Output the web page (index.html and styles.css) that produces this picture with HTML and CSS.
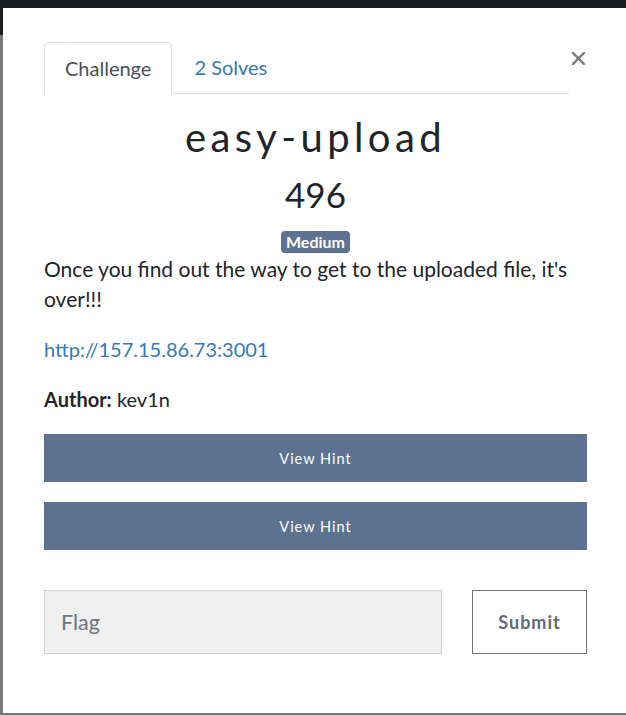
FILE: index.html
```html
<!DOCTYPE html>
<html lang="en">
<head>
<meta charset="utf-8">
<title>easy-upload</title>
<link rel="stylesheet" href="styles.css">
</head>
<body>
<div class="modal">
  <div class="tab-row">
    <ul class="nav-tabs">
      <li class="tab active">Challenge</li>
      <li class="tab link">2 Solves</li>
    </ul>
    <button class="close" aria-label="Close">
      <svg width="13" height="13" viewBox="0 0 13 13"><path d="M1 1L12 12M12 1L1 12" stroke="#7a7a7a" stroke-width="2.4" stroke-linecap="square"/></svg>
    </button>
  </div>
  <h2 class="title">easy-upload</h2>
  <h3 class="value">496</h3>
  <div class="badge-row"><span class="badge">Medium</span></div>
  <p class="desc lead">Once you find out the way to get to the uploaded file, it's over!!!</p>
  <p class="desc"><a class="url" href="#">http://157.15.86.73:3001</a></p>
  <p class="desc"><strong>Author:</strong> kev1n</p>
  <button class="hint">View Hint</button>
  <button class="hint">View Hint</button>
  <div class="submit-row">
    <input class="flag" type="text" placeholder="Flag">
    <button class="submit">Submit</button>
  </div>
</div>
</body>
</html>
```
FILE: styles.css
```css
html, body {
  margin: 0;
  padding: 0;
}
body {
  width: 626px;
  height: 715px;
  overflow: hidden;
  background: linear-gradient(to bottom, #1b1e21 0, #1b1e21 35px, #787878 35px);
  font-family: Lato, "Open Sans", sans-serif;
  color: #212529;
}
.modal {
  margin: 8px 0 0 3px;
  height: 705px;
  background: #fff;
  box-sizing: border-box;
  padding: 34px 39px 0 41px;
}
.tab-row {
  display: flex;
  align-items: flex-start;
}
.nav-tabs {
  list-style: none;
  margin: 0;
  padding: 0;
  display: flex;
  width: 525px;
  border-bottom: 1px solid #dee2e6;
}
.tab {
  height: 50px;
  box-sizing: border-box;
  padding: 0 20px;
  display: flex;
  align-items: center;
  font-size: 20px;
  border: 1px solid transparent;
  border-top-left-radius: 5px;
  border-top-right-radius: 5px;
  margin-bottom: -1px;
}
.tab.active {
  color: #495057;
  border-color: #dee2e6 #dee2e6 #fff;
  height: 52px;
  background: #fff;
}
.tab.link {
  color: #337ab7;
  padding-left: 21px;
}
.close {
  margin-left: auto;
  margin-right: 2px;
  margin-top: 10px;
  border: 0;
  background: none;
  padding: 0;
  width: 13px;
  height: 13px;
  display: block;
}
.close svg { display: block; }
.title {
  margin: 19px 0 0;
  text-align: center;
  font-size: 40px;
  line-height: 48px;
  font-weight: 400;
  letter-spacing: 4.4px;
}
.value {
  margin: 12px 0 0;
  text-align: center;
  font-size: 35px;
  line-height: 42px;
  font-weight: 400;
}
.badge-row {
  margin-top: 16px;
  text-align: center;
  height: 22px;
}
.badge {
  display: inline-block;
  background: #5c7290;
  color: #fff;
  font-weight: 700;
  font-size: 16px;
  line-height: 22px;
  padding: 0 5px;
  border-radius: 4px;
}
.desc {
  margin: 0 0 20px;
  font-size: 20px;
  line-height: 30px;
}
.desc.lead {
  margin-top: 1px;
  font-size: 21px;
}
.url {
  color: #337ab7;
  text-decoration: none;
}
.hint {
  display: block;
  width: 100%;
  height: 48px;
  margin: 0 0 20px;
  border: 0;
  background: #5c7290;
  color: #fff;
  font-family: Lato, sans-serif;
  font-size: 14.5px;
  letter-spacing: 1px;
}
.submit-row {
  display: flex;
  justify-content: space-between;
  margin-top: 40px;
}
.flag {
  width: 398px;
  height: 64px;
  box-sizing: border-box;
  background: #efefef;
  border: 1px solid #ced4da;
  padding: 0 16px;
  font-family: Lato, sans-serif;
  font-size: 21.5px;
  color: #495057;
}
.flag::placeholder { color: #6c757d; }
.submit {
  width: 115px;
  height: 64px;
  box-sizing: border-box;
  background: #fff;
  border: 1px solid #6c757d;
  font-family: Lato, sans-serif;
  font-weight: 700;
  font-size: 18px;
  letter-spacing: 1px;
  color: #626a71;
}
```
